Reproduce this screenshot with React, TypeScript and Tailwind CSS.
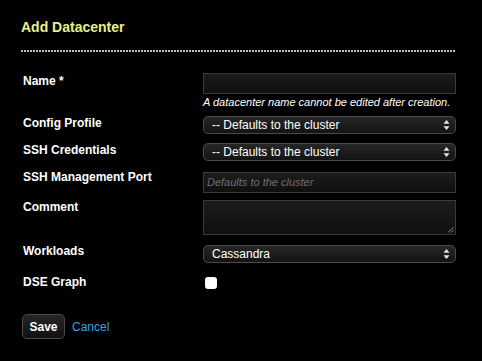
import { useState } from "react";

const labelCls = "text-[12px] leading-[14px] font-bold text-white";

function SelectArrows() {
  return (
    <svg width="7" height="11" viewBox="0 0 7 11" className="absolute right-[5px] top-1/2 -translate-y-1/2">
      <path d="M3.5 0.5 L6.5 4.2 L0.5 4.2 Z" fill="#e6e6e6" />
      <path d="M3.5 10.5 L6.5 6.8 L0.5 6.8 Z" fill="#e6e6e6" />
    </svg>
  );
}

function FakeSelect({ value }: { value: string }) {
  return (
    <div className="relative h-[18px] w-[253px] rounded-[5px] border border-[#4a4a4a] bg-gradient-to-b from-[#262626] to-[#141414] pl-[8px] text-[12px] leading-[16px] text-white">
      {value}
      <SelectArrows />
    </div>
  );
}

export default function App() {
  const [checked, setChecked] = useState(false);
  return (
    <div
      className="min-h-[361px] w-[482px] bg-black pl-[21px] pr-[26px] pt-[18px]"
      style={{ fontFamily: '"Liberation Sans", Arial, sans-serif' }}
    >
      <h1 className="text-[14px] leading-[18px] font-bold text-[#e9ef8e]">Add Datacenter</h1>
      <div className="mt-[14px] h-[2px] w-[435px] bg-[repeating-linear-gradient(90deg,#bdbdbd_0_2px,transparent_2px_3px)]" />

      <div className="mt-[21px] flex flex-col pl-[2px]">
        {/* Name */}
        <div className="grid grid-cols-[180px_253px]">
          <div className={`${labelCls} mt-[1px]`}>Name *</div>
          <div>
            <div className="h-[21px] w-[253px] border border-[#3a3a3a] bg-gradient-to-b from-[#1c1c1c] to-[#0f0f0f]" />
            <div className="mt-[2px] text-[11px] leading-[13px] italic text-white">
              A datacenter name cannot be edited after creation.
            </div>
          </div>
        </div>

        {/* Config Profile */}
        <div className="mt-[7px] grid grid-cols-[180px_253px]">
          <div className={labelCls}>Config Profile</div>
          <FakeSelect value="-- Defaults to the cluster" />
        </div>

        {/* SSH Credentials */}
        <div className="mt-[9px] grid grid-cols-[180px_253px]">
          <div className={labelCls}>SSH Credentials</div>
          <FakeSelect value="-- Defaults to the cluster" />
        </div>

        {/* SSH Management Port */}
        <div className="mt-[11px] grid grid-cols-[180px_253px]">
          <div className={`${labelCls} -mt-[2px]`}>SSH Management Port</div>
          <div className="h-[21px] w-[253px] border border-[#3a3a3a] bg-gradient-to-b from-[#1c1c1c] to-[#0f0f0f] pl-[3px] text-[11px] leading-[19px] italic text-[#6e6e6e]">
            Defaults to the cluster
          </div>
        </div>

        {/* Comment */}
        <div className="mt-[7px] grid grid-cols-[180px_253px]">
          <div className={labelCls}>Comment</div>
          <div className="relative h-[35px] w-[253px] border border-[#3a3a3a] bg-gradient-to-b from-[#1c1c1c] to-[#0f0f0f]">
            <svg width="7" height="7" viewBox="0 0 7 7" className="absolute bottom-[1px] right-[1px]">
              <path d="M1 6.5 L6.5 1 M4 6.5 L6.5 4" stroke="#8a8a8a" strokeWidth="1" />
            </svg>
          </div>
        </div>

        {/* Workloads */}
        <div className="mt-[10px] grid grid-cols-[180px_253px]">
          <div className={`${labelCls} -mt-[1px]`}>Workloads</div>
          <FakeSelect value="Cassandra" />
        </div>

        {/* DSE Graph */}
        <div className="mt-[12px] grid grid-cols-[180px_253px]">
          <div className={labelCls}>DSE Graph</div>
          <button
            type="button"
            onClick={() => setChecked(!checked)}
            className="mt-[2px] ml-[2px] h-[12px] w-[12px] rounded-[3px] bg-white"
          />
        </div>
      </div>

      <div className="mt-[25px] flex items-center gap-[7px] pl-[1px]">
        <button
          type="button"
          className="h-[25px] w-[43px] rounded-[5px] border border-[#4a4a4a] bg-gradient-to-b from-[#262626] to-[#111] text-[12px] font-bold text-white"
        >
          Save
        </button>
        <a className="text-[12px] text-[#3aa0e6]" href="#">
          Cancel
        </a>
      </div>
    </div>
  );
}
